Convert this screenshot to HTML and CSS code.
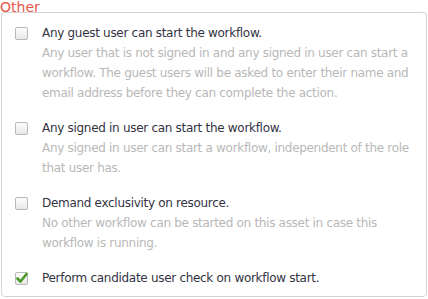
FILE: index.html
```html
<!DOCTYPE html>
<html lang="en">
<head>
    <meta charset="UTF-8">
    <title>Workflow options</title>
    <link rel="stylesheet" href="styles.css">
</head>
<body>
    <div class="legend">Other</div>
    <div class="panel">
        <div class="option">
            <span class="box"></span>
            <div class="text">
                <div class="title">Any guest user can start the workflow.</div>
                <div class="desc">Any user that is not signed in and any signed in user can start a workflow. The guest users will be asked to enter their name and email address before they can complete the action.</div>
            </div>
        </div>
        <div class="option">
            <span class="box"></span>
            <div class="text">
                <div class="title">Any signed in user can start the workflow.</div>
                <div class="desc">Any signed in user can start a workflow, independent of the role that user has.</div>
            </div>
        </div>
        <div class="option">
            <span class="box"></span>
            <div class="text">
                <div class="title">Demand exclusivity on resource.</div>
                <div class="desc">No other workflow can be started on this asset in case this workflow is running.</div>
            </div>
        </div>
        <div class="option">
            <span class="box checked">
                <svg width="13" height="13" viewBox="0 0 13 13">
                    <path d="M2.5 6.5 L5.5 9.5 L11.5 2" fill="none" stroke="#4a9a2a" stroke-width="2.6" stroke-linecap="round" stroke-linejoin="round"/>
                </svg>
            </span>
            <div class="text">
                <div class="title">Perform candidate user check on workflow start.</div>
            </div>
        </div>
    </div>
</body>
</html>
```

FILE: styles.css
```css
body {
    margin: 0;
    background-color: #fff;
    font-family: "DejaVu Sans", Verdana, sans-serif;
    font-size: 12px;
    letter-spacing: -0.3px;
    color: #333;
}
.legend {
    height: 14px;
    margin-bottom: -2px;
    line-height: 14px;
    font-size: 14px;
    letter-spacing: 0;
    color: #e8574c;
}
.panel {
    margin-left: 1px;
    width: 426px;
    box-sizing: border-box;
    border: 1px solid #d4d4d4;
    border-radius: 4px;
    padding: 10px 13px 8px 13px;
}
.option {
    display: flex;
    gap: 14px;
    margin-bottom: 15px;
}
.option:last-child {
    margin-bottom: 0;
}
.box {
    flex: none;
    width: 11px;
    height: 11px;
    margin-top: 4px;
    border: 1px solid #b8b8b8;
    border-radius: 2px;
    background: linear-gradient(#fdfdfd, #e8e8e8);
    position: relative;
}
.box svg {
    position: absolute;
    left: -1px;
    top: -1px;
}
.text {
    flex: 1;
    line-height: 20px;
}
.title {
    color: #333344;
}
.desc {
    color: #b8b8b8;
}
```
